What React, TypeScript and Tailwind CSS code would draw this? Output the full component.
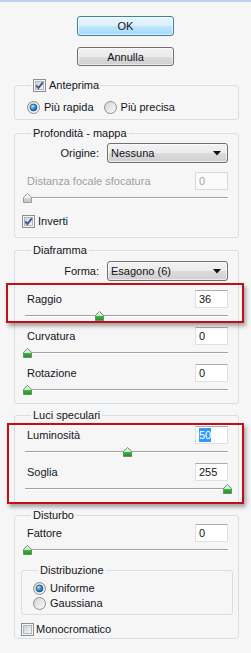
import { useId, type ReactNode } from "react";
import clsx from "clsx";

function CheckBox({ checked }: { checked: boolean }) {
  const id = useId();
  return (
    <svg width="13" height="13" viewBox="0 0 13 13" className="shrink-0">
      <defs>
        <linearGradient id={id} x1="0" y1="0" x2="1" y2="1">
          <stop offset="0" stopColor="#cbcfd5" />
          <stop offset="1" stopColor="#f7f7f7" />
        </linearGradient>
      </defs>
      <rect x="0.5" y="0.5" width="12" height="12" fill="#f4f4f4" stroke="#8f8f8f" />
      <rect x="2.5" y="2.5" width="8" height="8" fill={`url(#${id})`} stroke="#b3b8be" />
      {checked && <path d="M3.2 6.3 L5.4 9 L9.9 3.3" fill="none" stroke="#3f5596" strokeWidth="1.9" />}
    </svg>
  );
}

function Radio({ checked }: { checked: boolean }) {
  const id = useId();
  return (
    <svg width="13" height="13" viewBox="0 0 13 13" className="shrink-0">
      <defs>
        <linearGradient id={`${id}a`} x1="0" y1="0" x2="1" y2="1">
          <stop offset="0" stopColor="#d2d4d6" />
          <stop offset="1" stopColor="#fbfbfb" />
        </linearGradient>
        <radialGradient id={`${id}b`} cx="0.35" cy="0.3" r="0.8">
          <stop offset="0" stopColor="#b6eaff" />
          <stop offset="0.5" stopColor="#3b8fd8" />
          <stop offset="1" stopColor="#1a4f8f" />
        </radialGradient>
      </defs>
      <circle cx="6.5" cy="6.5" r="6" fill={`url(#${id}a)`} stroke="#8e8f8f" />
      {checked && <circle cx="6.5" cy="6.5" r="3.4" fill={`url(#${id}b)`} stroke="#1d4f86" strokeWidth="0.8" />}
    </svg>
  );
}

function Thumb({ disabled }: { disabled?: boolean }) {
  const id = useId();
  return (
    <svg width="9" height="10" viewBox="0 0 9 10">
      <defs>
        <linearGradient id={id} x1="0" y1="0" x2="0" y2="1">
          <stop offset="0" stopColor={disabled ? "#ffffff" : "#f2fbf2"} />
          <stop offset="0.45" stopColor={disabled ? "#eeeeee" : "#c9ecc9"} />
          <stop offset="0.55" stopColor={disabled ? "#d6d6d6" : "#39b53d"} />
          <stop offset="1" stopColor={disabled ? "#c4c4c4" : "#1f8f25"} />
        </linearGradient>
      </defs>
      <path d="M4.5 0.5 L8.5 4.3 V9.5 H0.5 V4.3 Z" fill={`url(#${id})`} stroke={disabled ? "#9a9a9a" : "#6d8f6d"} />
    </svg>
  );
}

function Slider({ value, max, disabled }: { value: number; max: number; disabled?: boolean }) {
  const left = (value / max) * 200 - 4;
  return (
    <div className="relative h-[12px] pt-[7px]">
      <div className="-ml-[2px] h-px rounded-l-full bg-[#a3a3a3] shadow-[0_1px_0_#ffffff]" />
      <div className="absolute top-[3px]" style={{ left }}>
        <Thumb disabled={disabled} />
      </div>
    </div>
  );
}

function NumField({ value, disabled, selected }: { value: string; disabled?: boolean; selected?: boolean }) {
  return (
    <div
      className={clsx(
        "flex h-[18px] w-[33px] items-center border pl-[3px]",
        disabled
          ? "border-[#d9d9d9] bg-[#fbfbfb] text-[#a8a8a8]"
          : "border-[#dde1e7] border-t-[#abadb3] bg-white"
      )}
    >
      {selected ? <span className="bg-[#3399ff] text-white">{value}</span> : value}
    </div>
  );
}

function Combo({ label, value }: { label: string; value: string }) {
  return (
    <div className="flex h-[20px] items-center justify-end gap-[8px]">
      <span>{label}</span>
      <div className="flex h-[20px] w-[121px] items-center justify-between rounded-[3px] border border-[#707070] bg-[linear-gradient(#f3f3f3,#ebebeb_50%,#dddddd_50%,#cfcfcf)] pl-[3px] pr-[6px] shadow-[inset_0_0_0_1px_rgba(255,255,255,0.6)]">
        <span>{value}</span>
        <svg width="8" height="5" viewBox="0 0 8 5">
          <path d="M0 0 H8 L4 4.5 Z" fill="#111111" />
        </svg>
      </div>
    </div>
  );
}

function ParamRow({ label, value, max, selected, disabled, className }: {
  label: string;
  value: number;
  max: number;
  selected?: boolean;
  disabled?: boolean;
  className?: string;
}) {
  return (
    <div className={className}>
      <div className="flex h-[18px] items-center justify-between">
        <span className={disabled ? "text-[#a0a0a0]" : undefined}>{label}</span>
        <NumField value={String(value)} selected={selected} disabled={disabled} />
      </div>
      <Slider value={value} max={max} disabled={disabled} />
    </div>
  );
}

function Group({ title, className, children }: { title: ReactNode; className?: string; children: ReactNode }) {
  return (
    <div className={clsx("rounded-[3px] border border-[#d5dfe5]", className)}>
      <div className="-mt-[8px] ml-[16px] flex h-[14px] w-fit items-center gap-[3px] bg-[#f6f6f6] px-[2px]">
        {title}
      </div>
      {children}
    </div>
  );
}

function Highlight({ className }: { className: string }) {
  return (
    <div
      className={clsx(
        "pointer-events-none absolute border-2 border-[#c10e17] shadow-[2px_3px_4px_rgba(0,0,0,0.35)]",
        className
      )}
    />
  );
}

export default function App() {
  return (
    <div className="h-[653px] w-[251px] overflow-hidden bg-[#f6f6f6] font-['Liberation_Sans',Arial,sans-serif] text-[11px] leading-[14px] text-[#141420]">
      <div className="h-[2px] bg-[#bcd3eb]" />

      <div className="flex flex-col items-center pt-[14px]">
        <button
          type="button"
          className="h-[20px] w-[97px] rounded-[3px] border border-[#3c7fb1] bg-[linear-gradient(#eaf6fd,#d9f0fc_50%,#bee6fd_50%,#a7d9f5)] shadow-[inset_0_0_0_1px_rgba(255,255,255,0.6)]"
        >
          OK
        </button>
        <button
          type="button"
          className="mt-[11px] h-[19px] w-[97px] rounded-[3px] border border-[#707070] bg-[linear-gradient(#f2f2f2,#ebebeb_50%,#dddddd_50%,#cfcfcf)] shadow-[inset_0_0_0_1px_rgba(255,255,255,0.6)]"
        >
          Annulla
        </button>
      </div>

      <Group
        className="mt-[19px] ml-[14px] mr-[12px] pb-[5px]"
        title={
          <>
            <CheckBox checked />
            <span>Anteprima</span>
          </>
        }
      >
        <div className="mt-[8px] flex h-[14px] items-center gap-[10px] pl-[12px]">
          <label className="flex items-center gap-[4px]">
            <Radio checked />
            Più rapida
          </label>
          <label className="flex items-center gap-[4px]">
            <Radio checked={false} />
            Più precisa
          </label>
        </div>
      </Group>

      <Group className="mt-[13px] ml-[14px] mr-[12px] pb-[9px]" title="Profondità - mappa">
        <div className="pl-[12px] pr-[10px]">
          <div className="mt-[3px]">
            <Combo label="Origine:" value="Nessuna" />
          </div>
          <ParamRow className="mt-[9px]" label="Distanza focale sfocatura" value={0} max={100} disabled />
          <label className="-ml-[5px] mt-[12px] flex h-[14px] items-center gap-[3px]">
            <CheckBox checked />
            Inverti
          </label>
        </div>
      </Group>

      <Group className="mt-[12px] ml-[14px] mr-[12px] pb-[9px]" title="Diaframma">
        <div className="pl-[12px] pr-[10px]">
          <div className="mt-[4px]">
            <Combo label="Forma:" value="Esagono (6)" />
          </div>
          <div className="relative mt-[9px]">
            <ParamRow label="Raggio" value={36} max={100} />
            <Highlight className="-top-[7px] -bottom-[3px] -left-[21px] -right-[16px]" />
          </div>
          <ParamRow className="mt-[7px]" label="Curvatura" value={0} max={100} />
          <ParamRow className="mt-[7px]" label="Rotazione" value={0} max={360} />
        </div>
      </Group>

      <Group className="mt-[11px] ml-[14px] mr-[12px] pb-[10px]" title="Luci speculari">
        <div className="relative mt-[4px] ml-[12px] mr-[10px]">
          <ParamRow label="Luminosità" value={50} max={100} selected />
          <ParamRow className="mt-[7px]" label="Soglia" value={255} max={255} />
          <Highlight className="-top-[3px] -bottom-[11px] -left-[20px] -right-[16px]" />
        </div>
      </Group>

      <Group className="mt-[11px] ml-[14px] mr-[12px] pb-[2px]" title="Disturbo">
        <div className="pl-[12px] pr-[10px]">
          <ParamRow className="mt-[2px]" label="Fattore" value={0} max={100} />
          <Group className="-ml-[6px] -mr-[5px] mt-[16px] pb-[4px]" title="Distribuzione">
            <div className="pl-[11px]">
              <label className="mt-[4px] flex h-[14px] items-center gap-[4px]">
                <Radio checked />
                Uniforme
              </label>
              <label className="mt-[1px] flex h-[14px] items-center gap-[4px]">
                <Radio checked={false} />
                Gaussiana
              </label>
            </div>
          </Group>
          <label className="-ml-[6px] mt-[7px] flex h-[14px] items-center gap-[2px]">
            <CheckBox checked={false} />
            Monocromatico
          </label>
        </div>
      </Group>
    </div>
  );
}
